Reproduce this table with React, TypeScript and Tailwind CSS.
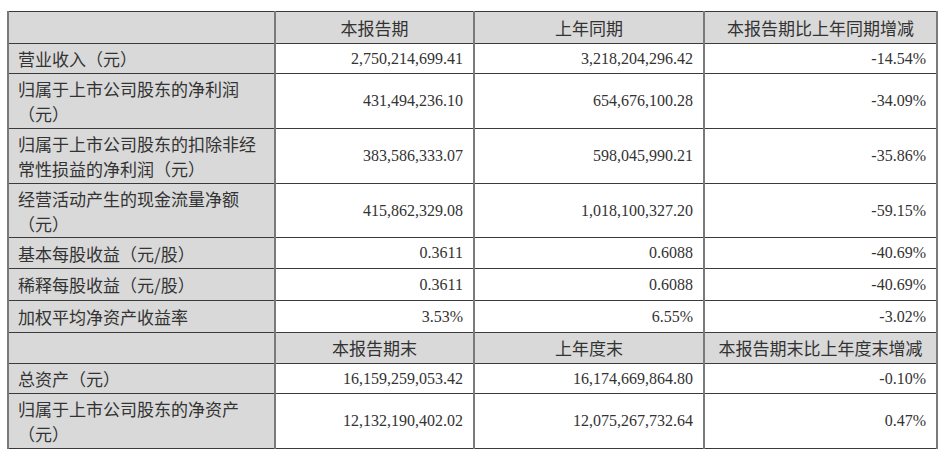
import React from "react"

type Row = {
  label: string[]
  values: string[]
  h: string
  head?: boolean
}

const ROWS: Row[] = [
  { label: [""], values: ["本报告期", "上年同期", "本报告期比上年同期增减"], h: "h-[32px]", head: true },
  { label: ["营业收入（元）"], values: ["2,750,214,699.41", "3,218,204,296.42", "-14.54%"], h: "h-[30px]" },
  { label: ["归属于上市公司股东的净利润", "（元）"], values: ["431,494,236.10", "654,676,100.28", "-34.09%"], h: "h-[55px]" },
  { label: ["归属于上市公司股东的扣除非经", "常性损益的净利润（元）"], values: ["383,586,333.07", "598,045,990.21", "-35.86%"], h: "h-[55px]" },
  { label: ["经营活动产生的现金流量净额", "（元）"], values: ["415,862,329.08", "1,018,100,327.20", "-59.15%"], h: "h-[54px]" },
  { label: ["基本每股收益（元/股）"], values: ["0.3611", "0.6088", "-40.69%"], h: "h-[31px]" },
  { label: ["稀释每股收益（元/股）"], values: ["0.3611", "0.6088", "-40.69%"], h: "h-[32px]" },
  { label: ["加权平均净资产收益率"], values: ["3.53%", "6.55%", "-3.02%"], h: "h-[32px]" },
  { label: [""], values: ["本报告期末", "上年度末", "本报告期末比上年度末增减"], h: "h-[31px]", head: true },
  { label: ["总资产（元）"], values: ["16,159,259,053.42", "16,174,669,864.80", "-0.10%"], h: "h-[30px]" },
  { label: ["归属于上市公司股东的净资产", "（元）"], values: ["12,132,190,402.02", "12,075,267,732.64", "0.47%"], h: "h-[55px]" },
]

export default function App() {
  return (
    <div className="w-[945px] h-[456px] bg-white pt-[11px] pl-[7px]">
      <table className="border-collapse table-fixed w-[929px] text-[#333]">
        <colgroup>
          <col className="w-[267px]" />
          <col className="w-[199px]" />
          <col className="w-[230px]" />
          <col className="w-[233px]" />
        </colgroup>
        <tbody>
          {ROWS.map((row, i) => (
            <tr key={i} className={row.h}>
              <td className="bg-[#d9d9d9] border-x-2 border-x-[#7a7a7a] border-y border-y-[#3a3a3a] pl-[9px] pr-1 align-middle font-['Noto_Sans_CJK_SC',sans-serif] text-[17px] leading-[25px]">
                {row.label.map((l, j) => (
                  <div key={j}>{l}</div>
                ))}
              </td>
              {row.values.map((v, j) =>
                row.head ? (
                  <td
                    key={j}
                    className="bg-[#d9d9d9] border-x-2 border-x-[#7a7a7a] border-y border-y-[#3a3a3a] text-center align-middle font-['Noto_Sans_CJK_SC',sans-serif] text-[17px]"
                  >
                    {v}
                  </td>
                ) : (
                  <td
                    key={j}
                    className="bg-white border-x-2 border-x-[#7a7a7a] border-y border-y-[#3a3a3a] text-right align-middle pr-[10px] font-['Liberation_Serif',serif] text-[16px]"
                  >
                    {v}
                  </td>
                )
              )}
            </tr>
          ))}
        </tbody>
      </table>
    </div>
  )
}
